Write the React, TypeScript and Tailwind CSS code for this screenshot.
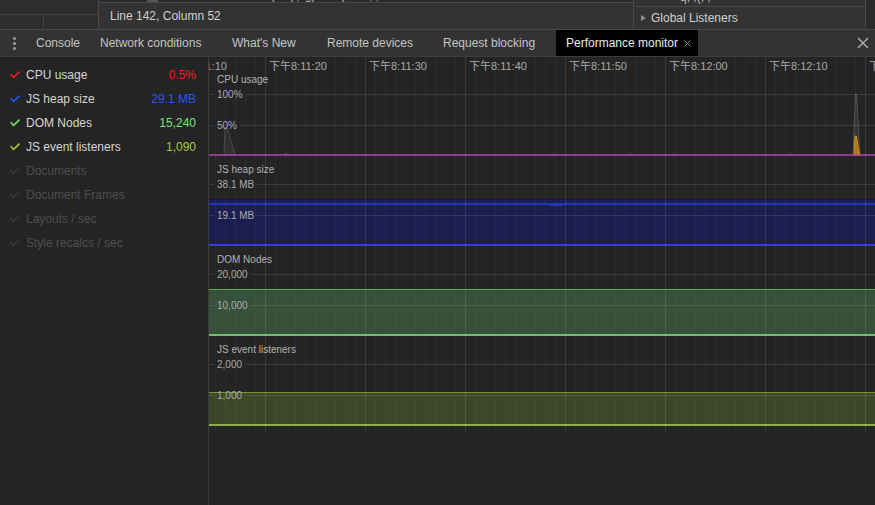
import React from "react";

const SANS = "font-['Liberation_Sans','Noto_Sans_CJK_SC',Arial,sans-serif]";

function Check({ color }: { color: string }) {
  return (
    <svg width="10" height="8" viewBox="0 0 10 8" className="shrink-0">
      <path d="M0.6 3 L3.6 6.4 L9.5 0.6" fill="none" stroke={color} strokeWidth="1.5" />
    </svg>
  );
}

type Metric = { label: string; value?: string; color: string; on: boolean };

const metrics: Metric[] = [
  { label: "CPU usage", value: "0.5%", color: "#f31d1d", on: true },
  { label: "JS heap size", value: "29.1 MB", color: "#2457ff", on: true },
  { label: "DOM Nodes", value: "15,240", color: "#72e472", on: true },
  { label: "JS event listeners", value: "1,090", color: "#a8cc3c", on: true },
  { label: "Documents", color: "#3a3a3a", on: false },
  { label: "Document Frames", color: "#3a3a3a", on: false },
  { label: "Layouts / sec", color: "#3a3a3a", on: false },
  { label: "Style recalcs / sec", color: "#3a3a3a", on: false },
];

function GridLine({ top, label }: { top: "a" | "b"; label: string }) {
  return (
    <div
      className={
        "absolute left-0 right-0 flex items-center h-[12px] " +
        (top === "a" ? "top-[22px]" : "top-[53px]")
      }
    >
      <div className="w-[5px] h-px bg-white/[0.1]" />
      <span className="px-[3px] text-[10px] leading-[12px] text-[#ababab] translate-y-[1px]">{label}</span>
      <div className="flex-1 h-px bg-white/[0.1]" />
    </div>
  );
}

function Panel({
  label,
  top,
  mid,
  children,
}: {
  label: string;
  top: string;
  mid: string;
  children?: React.ReactNode;
}) {
  return (
    <div className="relative h-[90px] shrink-0">
      {children}
      <div className="absolute left-[8px] top-[8px] text-[10px] leading-[12px] text-[#b2b2b2]">
        {label}
      </div>
      <GridLine top="a" label={top} />
      <GridLine top="b" label={mid} />
    </div>
  );
}

function Grid() {
  const xs = Array.from({ length: 67 }, (_, i) => 6 + i * 10);
  return (
    <svg
      className="absolute left-0 top-0 pointer-events-none z-10"
      width="666"
      height="376"
      shapeRendering="crispEdges"
    >
      {xs.map((x) => (
        <line
          key={x}
          x1={x + 0.5}
          x2={x + 0.5}
          y1={0}
          y2={376}
          stroke="#ffffff"
          strokeOpacity={x % 100 === 56 ? 0.1 : 0.03}
        />
      ))}
    </svg>
  );
}

function CpuChart() {
  return (
    <svg className="absolute left-0 top-0" width="666" height="90">
      <polygon points="15,89 16,61 18.5,62 26,89" fill="#303030" stroke="#4c4c4c" strokeWidth="1" />
      <polygon points="74,89 77,87.5 80,89" fill="#3a3a3a" stroke="#4a4a4a" />
      <polygon points="343,89 346,87.7 349,89" fill="#3a3a3a" stroke="#4a4a4a" />
      <polygon points="418,89 421,87.7 424,89" fill="#3a3a3a" stroke="#4a4a4a" />
      <polygon points="463,89 466,87.7 469,89" fill="#3a3a3a" stroke="#4a4a4a" />
      <polygon points="578,89 581,87.7 584,89" fill="#3a3a3a" stroke="#4a4a4a" />
      <polygon points="644,89 646.5,28 647.5,28 651,89" fill="#333" stroke="#5c5c5c" strokeWidth="0.8" />
      <polygon points="645,89 646,70 647.5,70 650.5,89" fill="#b07410" stroke="#e39a1c" strokeWidth="0.8" />
      <line x1="0" x2="666" y1="89" y2="89" stroke="#b43fb4" strokeWidth="1.5" />
    </svg>
  );
}

const times = [
  "下午8:11:10",
  "下午8:11:20",
  "下午8:11:30",
  "下午8:11:40",
  "下午8:11:50",
  "下午8:12:00",
  "下午8:12:10",
  "下午8:12:20",
];

export default function App() {
  return (
    <div className={"w-[875px] h-[505px] overflow-hidden bg-[#242424] flex flex-col " + SANS}>
      {/* top strip */}
      <div className="flex h-[30px] shrink-0 bg-[#333333] border-b border-[#484848]">
        <div className="w-[99px] bg-[#2d2d2d] border-r border-[#484848] flex flex-col">
          <div className="h-[15px] border-b border-[#434343]" />
          <div className="flex-1 flex">
            <div className="w-[44px] border-r border-[#434343]" />
          </div>
        </div>
        <div className="w-[534px] flex flex-col">
          <div className="h-[2px] bg-[#2a2a2a] relative overflow-hidden">
            <span className="absolute left-[24px] top-[-10px] text-[11px] leading-[12px] text-[#8a8a8a]">142</span>
            <span className="absolute left-[48px] top-0 w-[11px] h-[2px] bg-[#555]" />
            <span className="absolute left-[166px] top-[-10px] text-[11px] leading-[12px] whitespace-nowrap text-[#cfcfcf]">
              {"t.(.fct(t;ng) "}
              <span className="text-[#e3c84a]">{"wx"}</span>
              {" n(.: "}
              <span className="text-[#e3c84a]">{"="}</span>
              {" n; ; t.."}
            </span>
          </div>
          <div className="flex-1 border-t border-[#484848] flex items-center pl-[11px] text-[12px] text-[#d0d0d0]">
            Line 142, Column 52
          </div>
        </div>
        <div className="w-[232px] border-l border-[#4a4a4a] flex flex-col">
          <div className="h-[7px] border-b border-[#4a4a4a] relative overflow-hidden">
            <span className="absolute left-[46px] top-[-9px] text-[12px] leading-[12px] text-[#bbbbbb] whitespace-nowrap">
              q, ,(, ,
            </span>
          </div>
          <div className="flex-1 flex items-center pl-[7px] text-[12px] text-[#d0d0d0]">
            <span className="w-0 h-0 border-y-[3.5px] border-y-transparent border-l-[5px] border-l-[#8c8c8c] mr-[5px]" />
            Global Listeners
          </div>
        </div>
        <div className="flex-1 bg-[#2a2a2a] border-l border-[#484848]" />
      </div>

      {/* tab bar */}
      <div className="flex h-[27px] shrink-0 bg-[#333333] border-b border-[#3c3c3c] text-[12px] text-[#c4c4c4]">
        <div className="w-[26px] flex flex-col items-center justify-center gap-[2px] pl-[2px]">
          <span className="w-[3px] h-[3px] rounded-full bg-[#9c9c9c]" />
          <span className="w-[3px] h-[3px] rounded-full bg-[#9c9c9c]" />
          <span className="w-[3px] h-[3px] rounded-full bg-[#9c9c9c]" />
        </div>
        <div className="w-[64px] pl-[10px] flex items-center whitespace-nowrap">Console</div>
        <div className="w-[132px] pl-[10px] flex items-center whitespace-nowrap">Network conditions</div>
        <div className="w-[95px] pl-[10px] flex items-center whitespace-nowrap">What's New</div>
        <div className="w-[116px] pl-[10px] flex items-center whitespace-nowrap">Remote devices</div>
        <div className="w-[123px] pl-[10px] flex items-center whitespace-nowrap">Request blocking</div>
        <div className="w-[142px] pl-[10px] flex items-center whitespace-nowrap bg-black text-[#e8e8e8]">
          Performance monitor
          <svg width="7" height="7" viewBox="0 0 7 7" className="ml-[6px]">
            <path d="M0.5 0.5 L6.5 6.5 M6.5 0.5 L0.5 6.5" stroke="#8e8e8e" strokeWidth="1" />
          </svg>
        </div>
        <div className="flex-1" />
        <div className="w-[24px] flex items-center justify-center">
          <svg width="12" height="12" viewBox="0 0 12 12">
            <path d="M1 1 L11 11 M11 1 L1 11" stroke="#ababab" strokeWidth="1.5" />
          </svg>
        </div>
      </div>

      {/* content */}
      <div className="flex flex-1 min-h-0">
        <div className="w-[209px] shrink-0 border-r border-[#3c3c3c] bg-[#242424] pt-[6px]">
          {metrics.map((m) => (
            <div key={m.label} className="h-[24px] flex items-center pl-[10px] pr-[12px] text-[12px]">
              <Check color={m.color} />
              <span className={"ml-[6px] whitespace-nowrap " + (m.on ? "text-[#d6d6d6]" : "text-[#4e4e4e]")}>
                {m.label}
              </span>
              <div className="flex-1" />
              {m.value && <span style={{ color: m.color }}>{m.value}</span>}
            </div>
          ))}
        </div>

        <div className="relative flex-1 overflow-hidden bg-[#242424] flex flex-col pt-[9px]">
          <div className="absolute top-[1px] left-[-40px] flex h-[16px] items-center z-20">
            {times.map((t) => (
              <div key={t} className="w-[100px] shrink-0 text-[11px] leading-[14px] text-[#a8a8a8] whitespace-nowrap">
                {t}
              </div>
            ))}
          </div>

          <Panel label="CPU usage" top="100%" mid="50%">
            <CpuChart />
          </Panel>

          <Panel label="JS heap size" top="38.1 MB" mid="19.1 MB">
            <div className="absolute left-0 right-0 top-[43px] bottom-0 bg-[#1d1e50] border-t border-[#15154a] border-b-2 border-b-[#3b3bd4]">
              <div className="absolute left-0 right-0 top-[3px] h-[2px] bg-[#1f37b4]" />
              <div className="absolute left-[341px] top-[4px] w-[12px] h-[2px] bg-[#2438b8]" />
            </div>
          </Panel>

          <Panel label="DOM Nodes" top="20,000" mid="10,000">
            <div className="absolute left-0 right-0 top-[43px] bottom-0 bg-[#36503a] border-t border-[#5aaa5a] border-b-2 border-b-[#6fbe6f]" />
          </Panel>

          <Panel label="JS event listeners" top="2,000" mid="1,000">
            <div className="absolute left-0 right-0 top-[56px] bottom-0 bg-[#3d4629] border-t border-[#76963a] border-b-2 border-b-[#8cac4e]" />
          </Panel>

          <Grid />
        </div>
      </div>
    </div>
  );
}
